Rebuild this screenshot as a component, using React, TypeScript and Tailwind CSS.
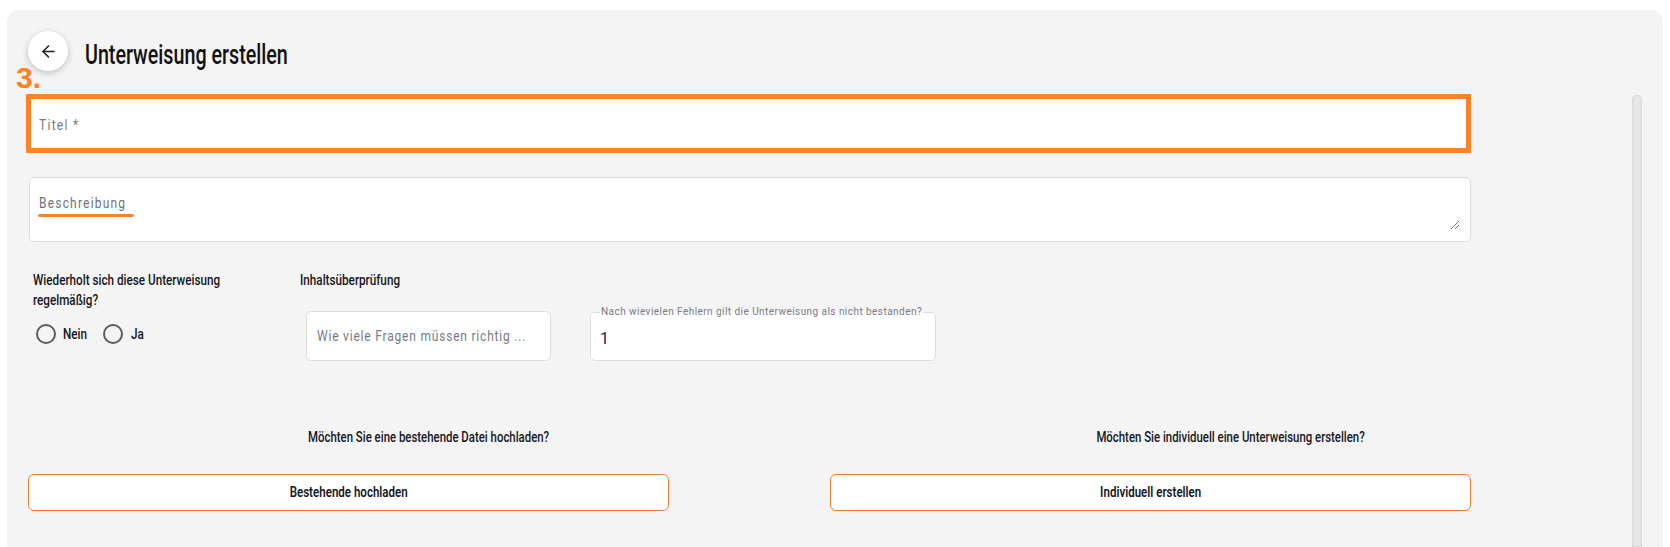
import { ArrowLeft } from "lucide-react";

const R = "font-['Roboto','Liberation_Sans',Arial,sans-serif]";

export default function App() {
  return (
    <div className="w-[1670px] h-[547px] bg-white overflow-hidden pt-[10px] px-[7px] relative">
      <div className={`h-[537px] bg-[#f4f4f4] rounded-t-[12px] px-[21px] flex flex-col text-[#16171f] ${R}`}>
        <div className="flex items-center pt-[21px]">
          <div className="w-[40px] h-[40px] rounded-full bg-white shadow-[0_2px_6px_rgba(0,0,0,0.22)] flex items-center justify-center">
            <ArrowLeft size={19} strokeWidth={2} className="text-[#222]" />
          </div>
          <h1 className="ml-[17px] mt-[7px] text-[27px] leading-[30px] font-medium text-[#111] whitespace-nowrap">
            <span className="inline-block origin-left scale-x-[0.73]">Unterweisung erstellen</span>
          </h1>
        </div>
        <div className="flex mt-[23px] flex-1">
          <div className="w-[1604px]">
            <div className="-ml-[2px] w-[1445px] h-[59px] border-[5px] border-[#ff8228] bg-white flex items-center pl-[8px] pt-[3px] text-[15px] tracking-[1.6px] text-[#777a86]">
              <span className="inline-block origin-left scale-x-[0.8] whitespace-nowrap">Titel *</span>
            </div>
            <div className="relative mt-[24px] ml-[1px] w-[1442px] h-[65px] border border-[#dcdcdc] rounded-[5px] bg-white pl-[9px] pt-[15px]">
              <div className="text-[15px] leading-[20px] tracking-[1.5px] text-[#6f7080]">
                <span className="inline-block origin-left scale-x-[0.8] whitespace-nowrap">Beschreibung</span>
              </div>
              <div className="-ml-[1px] mt-[1px] w-[96px] h-[3px] rounded-full bg-[#ff8228]" />
              <svg className="absolute right-[10px] bottom-[11px]" width="10" height="10" viewBox="0 0 10 10">
                <path d="M9 1L1 9M9 5L5 9" stroke="#777" strokeWidth="1" />
              </svg>
            </div>
            <div className="flex mt-[28px]">
              <div className="w-[272px] pl-[5px]">
                <div className="text-[15px] leading-[20px] font-medium">
                  <span className="block origin-left scale-x-[0.78] whitespace-nowrap">Wiederholt sich diese Unterweisung</span>
                  <span className="block origin-left scale-x-[0.78] whitespace-nowrap">regelmäßig?</span>
                </div>
                <div className="flex items-center mt-[14px] pl-[3px] h-[20px] text-[15px] font-medium">
                  <span className="w-[20px] h-[20px] rounded-full border-2 border-[#5c5c5c]" />
                  <span className="ml-[7px] inline-block origin-left scale-x-[0.78]">Nein</span>
                  <span className="ml-[9px] w-[20px] h-[20px] rounded-full border-2 border-[#5c5c5c]" />
                  <span className="ml-[8px] inline-block origin-left scale-x-[0.78]">Ja</span>
                </div>
              </div>
              <div className="flex flex-col">
                <div className="text-[15px] leading-[20px] font-medium">
                  <span className="inline-block origin-left scale-x-[0.78] whitespace-nowrap">Inhaltsüberprüfung</span>
                </div>
                <div className="flex items-end mt-[16px] pl-[6px]">
                  <div className="w-[245px] h-[50px] bg-white border border-[#dcdcdc] rounded-[5px] flex items-center pl-[10px] text-[15px] tracking-[1px] text-[#777a86] whitespace-nowrap overflow-hidden">
                    <span className="inline-block origin-left scale-x-[0.8]">Wie viele Fragen müssen richtig ...</span>
                  </div>
                  <fieldset className="ml-[39px] w-[346px] min-w-0 h-[55px] border border-[#dcdcdc] rounded-[5px] bg-white px-[9px]">
                    <legend className="px-[1px] text-[10px] leading-[12px] tracking-[0.45px] text-[#7a7a88] whitespace-nowrap">
                      Nach wievielen Fehlern gilt die Unterweisung als nicht bestanden?
                    </legend>
                    <div className="mt-[11px] text-[16px] leading-[20px] text-[#1a2a3a]">1</div>
                  </fieldset>
                </div>
              </div>
            </div>
            <div className="grid grid-cols-2 mt-[66px]">
              <div>
                <div className="text-center text-[15px] leading-[20px] font-medium whitespace-nowrap">
                  <span className="inline-block origin-center scale-x-[0.76]">Möchten Sie eine bestehende Datei hochladen?</span>
                </div>
                <button className="mt-[27px] w-[641px] h-[37px] border border-[#f07a35] rounded-[6px] bg-white text-[15px] font-semibold text-[#16171f] whitespace-nowrap">
                  <span className="inline-block origin-center scale-x-[0.77]">Bestehende hochladen</span>
                </button>
              </div>
              <div>
                <div className="text-center text-[15px] leading-[20px] font-medium whitespace-nowrap">
                  <span className="inline-block origin-center scale-x-[0.76]">Möchten Sie individuell eine Unterweisung erstellen?</span>
                </div>
                <button className="mt-[27px] w-[641px] h-[37px] border border-[#f07a35] rounded-[6px] bg-white text-[15px] font-semibold text-[#16171f] whitespace-nowrap">
                  <span className="inline-block origin-center scale-x-[0.77]">Individuell erstellen</span>
                </button>
              </div>
            </div>
          </div>
          <div className="w-[10px] mt-[1px] rounded-t-full bg-[#e8e8e8] shadow-[inset_1px_0_2px_rgba(0,0,0,0.08),inset_-1px_0_2px_rgba(0,0,0,0.08)]" />
        </div>
      </div>
      <div className="absolute left-[16px] top-[63px] text-[30px] leading-none font-bold text-[#ff8228] font-['Liberation_Sans',Arial,sans-serif]">
        3.
      </div>
    </div>
  );
}
